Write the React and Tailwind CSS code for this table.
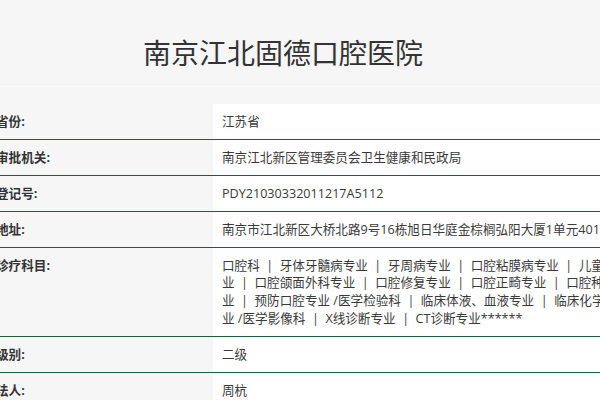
import React from "react";

const rows = [
  { label: "省份:", value: "江苏省" },
  { label: "审批机关:", value: "南京江北新区管理委员会卫生健康和民政局" },
  { label: "登记号:", value: "PDY21030332011217A5112" },
  { label: "地址:", value: "南京市江北新区大桥北路9号16栋旭日华庭金棕榈弘阳大厦1单元401室" },
  { label: "诊疗科目:", lines: [
    ["口腔科", "牙体牙髓病专业", "牙周病专业", "口腔粘膜病专业", "儿童口腔专"],
    ["业", "口腔颌面外科专业", "口腔修复专业", "口腔正畸专业", "口腔种植专"],
    ["业", "预防口腔专业 /医学检验科", "临床体液、血液专业", "临床化学检验专"],
    ["业 /医学影像科", "X线诊断专业", "CT诊断专业******"],
  ] },
  { label: "级别:", value: "二级" },
  { label: "法人:", value: "周杭" },
];

function Line({ parts }) {
  return (
    <div className="whitespace-nowrap">
      {parts.map((p, i) => (
        <React.Fragment key={i}>
          {i > 0 && <span className="mx-[6.5px]">|</span>}
          {p}
        </React.Fragment>
      ))}
    </div>
  );
}

export default function App() {
  return (
    <div
      className="w-[600px] h-[400px] overflow-hidden bg-[#f6f6f6] text-[#333]"
      style={{ fontFamily: '"Open Sans", "Noto Sans CJK SC", sans-serif' }}
    >
      <div className="h-[87px] border-b border-[#fcfcfc]">
        <h1 className="pt-[34px] pr-[34px] text-center text-[28px] leading-[38px] font-normal text-[#333]">
          南京江北固德口腔医院
        </h1>
      </div>

      <div className="mt-[17px] ml-[-13px] w-[640px] text-[12.6px] leading-[17.67px]">
        {rows.map((r) => (
          <div key={r.label} className="flex border-b border-[#1f5c3f]">
            <div className="w-[226px] shrink-0 px-[9px] py-[8.67px] font-bold text-[#333] bg-[#f6f6f6]">
              {r.label}
            </div>
            <div className="flex-1 bg-white px-[9px] py-[8.67px] text-[#3a3a3a]">
              {r.lines ? (
                r.lines.map((l, i) => <Line key={i} parts={l} />)
              ) : (
                <div className="whitespace-nowrap">{r.value}</div>
              )}
            </div>
          </div>
        ))}
      </div>
    </div>
  );
}
